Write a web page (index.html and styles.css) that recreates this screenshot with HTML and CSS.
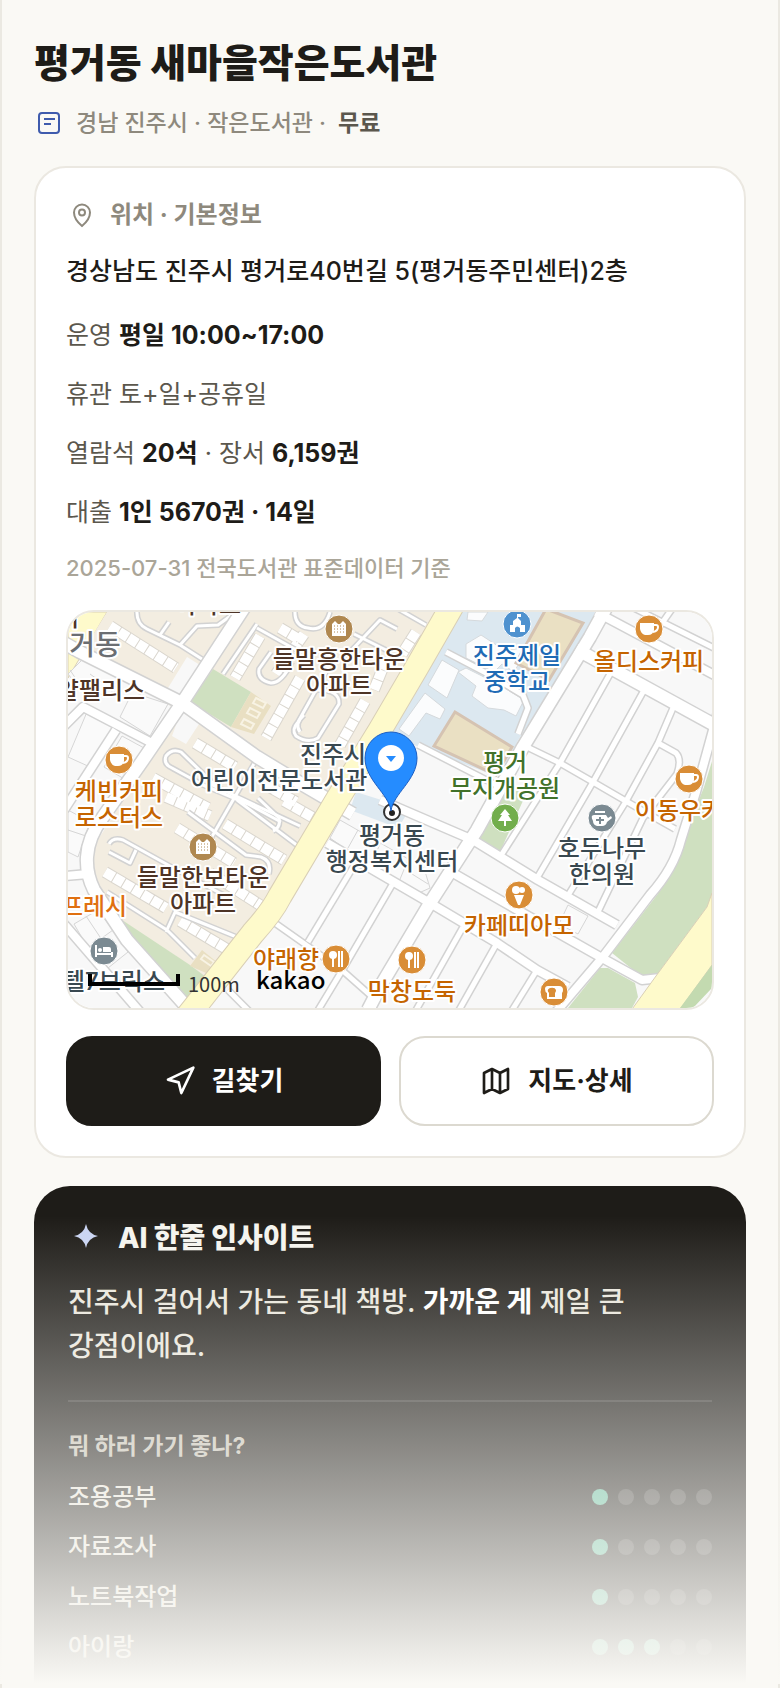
FILE: index.html
```html
<!DOCTYPE html>
<html lang="ko">
<head>
  <meta charset="UTF-8">
  <meta name="viewport" content="width=device-width, initial-scale=1.0">
  <title>평거동 새마을작은도서관</title>
  <link rel="stylesheet" href="styles.css">
</head>
<body>
  <main class="page">
    <header class="header">
      <h1>평거동 새마을작은도서관</h1>
      <div class="meta">
        <svg class="meta-icon" viewBox="0 0 30 30" aria-hidden="true">
          <rect x="5" y="5" width="20" height="20" rx="3"/>
          <path d="M10 11h11M10 16h7"/>
        </svg>
        <span>경남 진주시 · 작은도서관 ·</span>
        <strong>무료</strong>
      </div>
    </header>

    <section class="card">
      <h2 class="card-title">
        <svg class="pin-icon" viewBox="0 0 32 32" aria-hidden="true">
          <path d="M16 27C13 24.500 8 20 8 13.500a8 8 0 0 1 16 0C24 20 19 24.500 16 27z"/>
          <circle cx="16" cy="13.500" r="3"/>
        </svg>
        위치 · 기본정보
      </h2>
      <p class="address">경상남도 진주시 평거로40번길 5(평거동주민센터)2층</p>
      <div class="info">
        <p>운영 <strong>평일 10:00~17:00</strong></p>
        <p>휴관 토+일+공휴일</p>
        <p>열람석 <strong>20석</strong> · 장서 <strong>6,159권</strong></p>
        <p>대출 <strong>1인 5670권 · 14일</strong></p>
      </div>
      <p class="source">2025-07-31 전국도서관 표준데이터 기준</p>

      <div class="map">
        <svg viewBox="0 0 644 396" preserveAspectRatio="xMidYMid slice">
          <defs>
            <g id="roads-wide">
              <path d="M-4 31L12 40L114 91L189 145L232 171L285 202"/>
              <path d="M176-4L114 91L75 148L35 205Q20 225 19 245Q18 262 26 278L59 328L117 393"/>
              <path d="M538-4L522 25L455 135L409 218L362 291L312 375L300 398"/>
              <path d="M508 37L650 115"/>
            </g>
            <g id="roads-mid">
              <path d="M528 0L650 65"/>
              <path d="M385 261L432 288L534 346L574 368L592 366"/>
              <path d="M650 100L628 180L613 228Q606 256 582 283L534 346L488 400"/>
              <path d="M312 188L405 228L470 268L549 313"/>
              <path d="M259 231L362 291L429 331L469 358L500 375"/>
              <path d="M-4 114L15 95L82 130"/>
              <path d="M48 118L-4 198"/>
              <path d="M-4 264L20 262"/>
              <path d="M-4 312L72 400"/>
            </g>
            <g id="roads-narrow">
              <path d="M566-4L650 38"/>
              <path d="M606-6L592 14"/>
              <path d="M459 135L492 151L525 170L575 199L607 217"/>
              <path d="M542 62L492 151L432 245"/>
              <path d="M575 80L525 170L469 266"/>
              <path d="M605 96L590 131L557 191L499 285"/>
              <path d="M590 131L608 141Q614 147 609 162L575 206L529 302"/>
              <path d="M287 252L240 330"/>
              <path d="M324 273L275 357L249 400"/>
              <path d="M395 315L347 400"/>
              <path d="M429 331L390 400"/>
              <path d="M469 358L443 400"/>
              <path d="M204 309L275 359L310 390"/>
              <path d="M350 133L434 176"/>
              <path d="M160 378L182 400"/>
              <path d="M378 40L420 62L455 83L460 96L450 122"/>
            </g>
            <g id="alleys">
              <path d="M69-2Q68 12 79 17L112 33L137 49"/>
              <path d="M101 10L92 23"/>
              <path d="M112 33L129 14L150 13L168 0"/>
              <path d="M189 12L155 62M189 16L232 40"/>
              <path d="M203 40L191 57Q189 68 203 71Q214 71 224 50"/>
              <path d="M227-2Q226 14 240 16Q256 20 262 0"/>
              <path d="M280 42L312 8L329 17M286 22L318 38M330-3L358 13"/>
              <path d="M250 78Q272 78 271 92L250 126Q240 132 228 124Q223 118 230 110L258 60"/>
              <path d="M232 120Q226 112 236 103"/>
              <path d="M150 176L113 140Q104 136 98 144Q95 152 104 156L135 173L180 192L213 210"/>
              <path d="M187 150L142 228"/>
              <path d="M142 172L232 214"/>
              <path d="M41 232Q45 225 55 228L120 264L165 288"/>
              <path d="M41 240L62 251L68 238"/>
              <path d="M120 200L178 243L193 245Q204 249 201 262"/>
              <path d="M169 188L230 234M190 186L211 206Q213 216 205 219"/>
              <path d="M39 280L99 318L127 346M108 298L98 320M107 300L176 328"/>
            </g>
            <g id="blocks">
              <path d="M42 14L108 56"/>
              <path d="M192 24L167 66"/>
              <path d="M232 66L198 126"/>
              <path d="M212 16L232 28"/>
              <path d="M127 131L167 155"/>
              <path d="M85 166L140 196"/>
              <path d="M236 22L208 62"/>
              <path d="M297 89L272 133"/>
              <path d="M318 48L306 78"/>
              <path d="M348 20L334 42"/>
              <path d="M98 185L142 204"/>
              <path d="M157 212L216 248"/>
              <path d="M109 216L166 251"/>
              <path d="M37 260L98 296"/>
              <path d="M112 309L162 339"/>
              <path d="M142 261L192 293"/>
              <path d="M196 172L228 190"/>
              <path d="M216 189L246 206"/>
            </g>
            <path id="main-road" d="M384-6L349 55L312 118L269 188L212 284Q204 300 185 321L126 396L118 406"/>
            <g id="coffee">
              <path fill="#fff" d="M-9-6H5V1Q4 6-1 6H-4Q-8 5-9 0z"/>
              <path fill="none" stroke="#fff" stroke-width="2" d="M5-4H7Q9-4 9-2Q9 2 4 3"/>
            </g>
            <g id="apartment">
              <path fill="#fff" d="M-7 7V-5L-4-8L-1-5H1L4-8L7-5V7z"/>
              <path stroke="#b08850" stroke-width="1" stroke-dasharray="1 2" d="M-5-3H6M-5 0H6M-5 3H6"/>
            </g>
            <g id="cutlery">
              <circle cx="-3" cy="-4" r="4" fill="#fff"/>
              <path stroke="#fff" stroke-width="2" d="M-3-2V8M3-8V8M6-8V8"/>
            </g>
          </defs>

          <rect width="644" height="396" fill="#f8f8f8"/>
          <path class="yellow" d="M0 0H39L0 66z"/>
          <path fill="#f3ede1" d="M39 0H372L300 118L255 188L205 290L118 388L25 272L22 240L80 150L108 97L12 44z"/>
          <path fill="#f8f8f8" d="M119 45L132 53L113 84L100 76zM113 99L131 112L118 132L104 124z"/>

          <!-- school grounds -->
          <path fill="#dce8f0" d="M392 0H527L522 14L449 130L436 167L354 136L322 124z"/>
          <path fill="#dce8f0" d="M288 180L342 197L330 216L282 198z"/>
          <g class="building">
            <path d="M374 48L391 58L379 86L360 73z"/>
            <path d="M357 81L377 97L372 107L358 101L341 124L331 117z"/>
            <path d="M398 32L413 23L436 38L460 36L446 60L434 52L426 60L398 46z"/>
            <path d="M390 60L398 56L430 72L456 88L448 104L436 98L420 96L404 84L408 74z"/>
            <path d="M400 0H420L414 9L399 8z"/>
          </g>
          <g class="field">
            <path d="M478-3L515 11L481 68L448 51z"/>
            <path d="M387 100L444 135L428 163L366 134z"/>
          </g>

          <!-- parks -->
          <g fill="#cfe0c0">
            <path d="M145 57L183 80L163 115L122 90z"/>
            <path d="M42 300L122 353L142 368L117 390z"/>
            <path d="M440 170L458 182L432 240L409 226z"/>
            <path d="M650 130L636 175L599 268L589 283L544 341L574 365L588 364L639 295L650 270z"/>
            <path d="M532 356L540 356L567 371L570 385L564 396H500z"/>
          </g>
          <path fill="#e9dfc2" d="M183 80L203 94L186 122L163 115zM134 338L155 355L145 364L122 354z"/>
          <path class="court" d="M188 86L198 91L195 96L185 91zM182 96L192 101L189 106L179 101zM176 107L186 112L183 117L173 112zM136 343L146 350L143 354L133 347z"/>

          <!-- lots -->
          <g class="lot">
            <path d="M62 85L72 83L100 92L82 124L52 105z"/>
            <path d="M19 100L45 115L22 155L0 145z"/>
            <path d="M54 124L76 136L58 168L36 155z"/>
            <path d="M0 62L22 40L58 60L40 85L8 72z"/>
            <path d="M2 58L18 82M22 62L50 82"/>
            <path d="M0 198L22 210L10 245L0 240zM0 218L18 224"/>
            <path d="M6 312L30 298L45 318L20 336zM18 304L34 328M45 318L60 340L40 356"/>
            <path d="M272 208L356 256L362 276L344 284L262 226zM290 218L280 236M312 232L304 250M340 248L330 272M344 262L360 272"/>
            <path d="M500 293L520 304L510 322L491 312z"/>
          </g>

          <use href="#blocks" class="block-edge"/>
          <use href="#blocks" class="block"/>
          <use href="#alleys" class="alley-edge"/>
          <use href="#alleys" class="alley"/>
          <use href="#roads-narrow" class="narrow-edge"/>
          <use href="#roads-mid" class="mid-edge"/>
          <use href="#roads-wide" class="wide-edge"/>
          <use href="#roads-narrow" class="narrow"/>
          <use href="#roads-mid" class="mid"/>
          <use href="#roads-wide" class="wide"/>
          <use href="#main-road" class="main-edge"/>
          <use href="#main-road" class="main"/>
          <path class="yellow" d="M644 281L639 295L588 364L562 400H610L644 353z"/>
          <path fill="#c3dab0" d="M644 353L612 396H625L644 376z"/>

          <!-- place markers -->
          <g class="marker">
            <g transform="translate(51 148)"><circle r="14" fill="#d98d36"/><use href="#coffee"/></g>
            <g transform="translate(581 17)"><circle r="14" fill="#d98d36"/><use href="#coffee"/></g>
            <g transform="translate(621 167)"><circle r="14" fill="#d98d36"/><use href="#coffee"/></g>
            <g transform="translate(271 17)"><circle r="14" fill="#b08850"/><use href="#apartment"/></g>
            <g transform="translate(135 235)"><circle r="14" fill="#b08850"/><use href="#apartment"/></g>
            <g transform="translate(268 347)"><circle r="14" fill="#d98d36"/><use href="#cutlery"/></g>
            <g transform="translate(344 348)"><circle r="14" fill="#d98d36"/><use href="#cutlery"/></g>
            <g transform="translate(449 12)">
              <circle r="14" fill="#4f92cf"/>
              <path fill="#fff" d="M-7 8V1H-4V-3L0-6V-10H4V-7H1V-6L4-3V1H8V8H3V4Q0 1-2 4V8z"/>
            </g>
            <g transform="translate(36 339)">
              <circle r="14" fill="#7b8a92"/>
              <path fill="#fff" d="M-9-6H-7V2H7V-2Q7-4 5-4H-1V1H9V6H7V4H-7V6H-9z"/>
              <circle cx="-4" cy="-1" r="2" fill="#fff"/>
            </g>
            <g transform="translate(437 206)">
              <circle r="14" fill="#72ae4c"/>
              <path fill="#fff" d="M0-9L5-3H3L7 3H1V8H-1V3H-7L-3-3H-5z"/>
            </g>
            <g transform="translate(534 206)">
              <circle r="14" fill="#7b8a92"/>
              <path fill="#fff" d="M-7-7H3V-5H-7zM-8-3H4L6 0L9-2L10 0L5 4Q4 8 0 8H-5Q-9 7-9 3Q-12-3-8-3z"/>
              <path stroke="#7b8a92" stroke-width="2" d="M-2-1V6M-6 2H2"/>
            </g>
            <g transform="translate(451 283)">
              <circle r="14" fill="#d98d36"/>
              <circle cx="-3" cy="-5" r="4" fill="#fff"/>
              <circle cx="3" cy="-5" r="3" fill="#fff"/>
              <path fill="#fff" d="M-5 0H5L1 10H-1z"/>
            </g>
            <g transform="translate(486 380)">
              <circle r="14" fill="#d98d36"/>
              <path fill="#fff" d="M-6-6H5Q9-6 9-2Q9 0 8 1V7H-7V1Q-9 0-9-3Q-9-6-6-6z"/>
              <path fill="#d98d36" d="M-4-4Q1-5 2-2Q2 0 1 1V5H-5V1Q-8-2-4-4z"/>
            </g>
          </g>

          <!-- place names -->
          <g class="label">
            <g class="brown">
              <text x="271" y="56">들말흥한타운</text>
              <text x="271" y="82">아파트</text>
              <text x="135" y="274">들말한보타운</text>
              <text x="135" y="300">아파트</text>
              <text x="33" y="87">얄팰리스</text>
              <text x="140" y="1">아파트</text>
              <text x="0" y="14">터</text>
            </g>
            <g class="blue">
              <text x="449" y="52">진주제일</text>
              <text x="449" y="78">중학교</text>
            </g>
            <g class="orange">
              <text x="581" y="58">올디스커피</text>
              <text x="51" y="188">케빈커피</text>
              <text x="51" y="214">로스터스</text>
              <text x="622" y="207">이동우커피</text>
              <text x="451" y="322">카페띠아모</text>
              <text x="218" y="356">야래향</text>
              <text x="344" y="388">막창도둑</text>
              <text class="fresh" x="26" y="303">프레시</text>
            </g>
            <g class="green">
              <text x="437" y="159">평거</text>
              <text x="437" y="185">무지개공원</text>
            </g>
            <g class="slate">
              <text x="265" y="151">진주시</text>
              <text x="211" y="177">어린이전문도서관</text>
              <text x="324" y="232">평거동</text>
              <text x="324" y="258">행정복지센터</text>
              <text x="534" y="245">호두나무</text>
              <text x="534" y="271">한의원</text>
              <text x="46" y="378">텔7브릭스</text>
            </g>
            <text class="district" x="27" y="43">거동</text>
          </g>

          <!-- scale and provider -->
          <path fill="none" stroke="#000" stroke-width="4" d="M22 362V372H110V362"/>
          <text class="scale" x="120" y="380">100m</text>
          <text class="provider" x="188" y="377">kakao</text>

          <!-- current library -->
          <circle cx="324" cy="200" r="8" fill="#fff" stroke="#333" stroke-width="2"/>
          <circle cx="324" cy="201" r="3" fill="#222"/>
          <path fill="#258cff" stroke="#1c5fc4" d="M323 199C321 182 297 168 297 146A26 26 0 0 1 349 146C349 168 325 182 323 199z"/>
          <circle cx="323" cy="146" r="13" fill="#fff"/>
          <path fill="#258cff" d="M318 144H328L323 150z"/>
        </svg>
      </div>

      <div class="actions">
        <button type="button" class="btn btn-dark">
          <svg viewBox="0 0 24 24" aria-hidden="true"><path d="M3 11L22 2L13 21L11 13z"/></svg>
          <span>길찾기</span>
        </button>
        <button type="button" class="btn">
          <svg viewBox="0 0 24 24" aria-hidden="true"><path d="M3 6L9 3L15 6L21 3V18L15 21L9 18L3 21zM9 3V18M15 6V21"/></svg>
          <span>지도·상세</span>
        </button>
      </div>
    </section>

    <div class="preview">
      <section class="insight">
        <h2>
          <svg viewBox="0 0 36 36" aria-hidden="true"><path d="M18 4Q20 14 30 16Q20 18 18 28Q16 18 6 16Q16 14 18 4z"/></svg>
          AI 한줄 인사이트
        </h2>
        <p class="insight-text">진주시 걸어서 가는 동네 책방. <strong>가까운 게</strong> 제일 큰 강점이에요.</p>
        <h3>뭐 하러 가기 좋나?</h3>
        <ul class="scores">
          <li>조용공부 <span class="dots"><i class="on"></i><i></i><i></i><i></i><i></i></span></li>
          <li>자료조사 <span class="dots"><i class="on"></i><i></i><i></i><i></i><i></i></span></li>
          <li>노트북작업 <span class="dots"><i class="on"></i><i></i><i></i><i></i><i></i></span></li>
          <li>아이랑 <span class="dots"><i class="on"></i><i class="on"></i><i class="on"></i><i></i><i></i></span></li>
        </ul>
      </section>
    </div>
  </main>
</body>
</html>
```
FILE: styles.css
```css
* {
  box-sizing: border-box;
}

body {
  margin: 0;
  background: #faf9f5;
  color: #1e1c18;
  font-family: Inter, "Noto Sans CJK KR", sans-serif;
  font-size: 24px;
  font-weight: 500;
  word-break: keep-all;
}

h1, h2, h3, p, ul {
  margin: 0;
  padding: 0;
}

.page {
  min-height: 100vh;
  padding: 38px 32px 0;
  border: solid #ebe9e2;
  border-width: 0 2px;
}

h1 {
  font-size: 39px;
  line-height: 50px;
  font-weight: 800;
}

.meta {
  display: flex;
  align-items: center;
  gap: 12px;
  margin: 18px 0 26px;
  font-size: 23px;
  line-height: 34px;
  color: #8e897d;
}

.meta strong {
  color: #5b574d;
}

.meta-icon {
  width: 30px;
  height: 30px;
  fill: none;
  stroke: #3f5bad;
  stroke-width: 2;
}

/* location card */
.card {
  padding: 30px;
  border: 2px solid #ebe8e1;
  border-radius: 32px;
  background: #fff;
}

.card-title {
  display: flex;
  align-items: center;
  gap: 12px;
  font-size: 24px;
  line-height: 34px;
  color: #8e897d;
}

.pin-icon {
  width: 32px;
  height: 32px;
  fill: none;
  stroke: #8e897d;
  stroke-width: 2;
}

.address {
  margin: 18px 0 24px;
  font-size: 25px;
  line-height: 42px;
}

.info {
  display: grid;
  gap: 20px;
  font-size: 25px;
  line-height: 39px;
  font-weight: 400;
  color: #5b574d;
}

.info strong {
  color: #1e1c18;
}

.source {
  margin: 18px 0 24px;
  font-size: 22px;
  line-height: 36px;
  color: #aaa598;
}

.map {
  border: 2px solid #ebe8e1;
  border-radius: 28px;
  overflow: hidden;
}

.map svg {
  display: block;
  width: 100%;
  height: 396px;
}

.map use {
  fill: none;
  stroke-linejoin: round;
}

.yellow {
  fill: #fefacb;
  stroke: #d9cfb6;
}

.main-edge { stroke: #d9cfb6; stroke-width: 25; }
.main { stroke: #fefacb; stroke-width: 23; }
.wide-edge { stroke: #d2d2d2; stroke-width: 15; }
.wide { stroke: #fff; stroke-width: 12; }
.mid-edge { stroke: #d2d2d2; stroke-width: 11; }
.mid { stroke: #fff; stroke-width: 8; }
.narrow-edge { stroke: #d2d2d2; stroke-width: 8; }
.narrow { stroke: #fff; stroke-width: 5; }
.alley-edge { stroke: #d2d2d2; stroke-width: 6; }
.alley { stroke: #fff; stroke-width: 3; }
.block-edge { stroke: #dad6ce; stroke-width: 12; }
.block { stroke: #fff; stroke-width: 10; stroke-dasharray: 10 1; }

.building {
  fill: #fbfcfd;
  stroke: #d5d9dc;
}

.field {
  fill: #eae0c3;
  stroke: #d5c3b2;
  stroke-width: 3;
}

.court {
  fill: none;
  stroke: #f8f3e4;
  stroke-width: 2;
}

.lot {
  fill: #fafafa;
  stroke: #d6d6d6;
}

.marker circle[r="14"] {
  stroke: #fff;
}

.label {
  font-size: 24px;
  font-weight: 500;
  text-anchor: middle;
  stroke: #fff;
  stroke-width: 4px;
  stroke-linejoin: round;
  paint-order: stroke;
}

.brown { fill: #4e3426; }
.blue { fill: #1f6bb5; }
.orange { fill: #c56400; }
.fresh { fill: #e07010; }
.green { fill: #41722a; }
.slate { fill: #394850; }

.district {
  font-size: 28px;
  fill: #6b6e72;
}

.scale {
  font-family: "Noto Sans CJK KR", sans-serif;
  font-size: 20px;
  font-weight: 400;
  fill: #333;
}

.provider {
  font-family: "Noto Sans CJK KR", sans-serif;
  font-size: 24px;
  fill: #000;
}

.actions {
  display: grid;
  grid-template-columns: 1fr 1fr;
  gap: 18px;
  margin-top: 26px;
}

.btn {
  display: flex;
  align-items: center;
  justify-content: center;
  gap: 16px;
  height: 90px;
  border: 2px solid #dcd9d0;
  border-radius: 26px;
  background: #fff;
  color: #1e1c18;
  font: inherit;
  font-size: 26px;
  line-height: 32px;
  font-weight: 700;
  cursor: pointer;
}

.btn-dark {
  border-color: #1e1c18;
  background: #1e1c18;
  color: #fff;
}

.btn svg {
  width: 32px;
  height: 32px;
  fill: none;
  stroke: currentColor;
  stroke-width: 2;
  stroke-linejoin: round;
}

/* insight preview, fades into the page */
.preview {
  position: relative;
  margin: 28px -32px 0;
  padding: 0 32px;
}

.preview::after {
  content: "";
  position: absolute;
  inset: 0 -2px;
  background: linear-gradient(rgba(250, 249, 245, 0) 6%, #faf9f5);
  pointer-events: none;
}

.insight {
  padding: 34px 34px 20px;
  border-radius: 36px 36px 0 0;
  background: #1e1c18;
  color: #e9e6dc;
}

.insight h2 {
  display: flex;
  align-items: center;
  gap: 14px;
  font-size: 28px;
  line-height: 36px;
  font-weight: 800;
  color: #f5f4ee;
}

.insight h2 svg {
  width: 36px;
  height: 36px;
  fill: #c9d4f2;
}

.insight-text {
  margin: 24px 0 32px;
  font-size: 28px;
  line-height: 44px;
}

.insight-text strong {
  color: #fff;
}

.insight h3 {
  padding-top: 28px;
  border-top: 2px solid rgba(255, 255, 255, 0.12);
  font-size: 23px;
  line-height: 32px;
  color: #c3bfb2;
}

.scores {
  display: grid;
  gap: 16px;
  margin-top: 18px;
  list-style: none;
}

.scores li {
  display: flex;
  align-items: center;
  justify-content: space-between;
  line-height: 34px;
}

.dots {
  display: flex;
  gap: 10px;
}

.dots i {
  width: 16px;
  height: 16px;
  border-radius: 50%;
  background: rgba(255, 255, 255, 0.16);
}

.dots .on {
  background: #5bb998;
}
```
